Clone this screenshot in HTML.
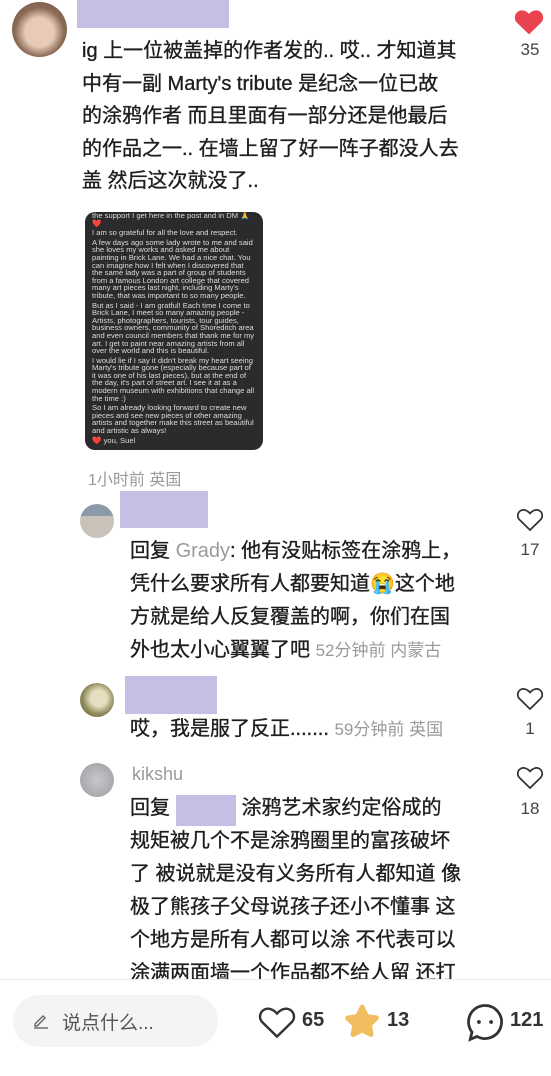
<!DOCTYPE html>
<html><head><meta charset="utf-8"><style>
*{margin:0;padding:0;box-sizing:border-box}
body{width:551px;height:1076px;background:#fff;position:relative;overflow:hidden;font-family:"Liberation Sans","Noto Sans CJK SC",sans-serif;color:#222}
.a{position:absolute}
.pb{position:absolute;background:#c6bfe5}
.av{position:absolute;border-radius:50%}
.t{position:absolute;font-size:20px;line-height:33px;white-space:nowrap;color:#1e1e1e;-webkit-text-stroke:0.35px #1e1e1e}
.g{color:#9a9a9a;-webkit-text-stroke:0}
.cnt{position:absolute;font-size:17px;color:#444;text-align:center;width:40px}
.img{position:absolute;left:85px;top:212px;width:178px;height:238px;background:#2b2a2c;border-radius:10px;overflow:hidden;color:#ddd;font-size:7.6px;line-height:7.6px;padding:0 7px}
.img p{margin-bottom:2px}
</style></head><body>
<div class="av" style="left:12px;top:2px;width:55px;height:55px;background:radial-gradient(circle at 50% 55%,#e7cbb8 0 35%,#8a6a55 60%,#6a5545)"></div>
<div class="pb" style="left:77px;top:0;width:152px;height:28px"></div>
<div class="t" style="left:82px;top:35px;line-height:32.5px">ig 上一位被盖掉的作者发的.. 哎.. 才知道其<br>中有一副 Marty's tribute 是纪念一位已故<br>的涂鸦作者 而且里面有一部分还是他最后<br>的作品之一.. 在墙上留了好一阵子都没人去<br>盖 然后这次就没了..</div>
<svg class="a" style="left:514px;top:9px" width="30" height="26" viewBox="0 0 24 21"><path d="M12 20.5 2.2 11C-.5 8.2.3 3.4 3.8 1.7 6.7.3 10 1.5 12 4c2-2.5 5.3-3.7 8.2-2.3 3.5 1.7 4.3 6.5 1.6 9.3Z" fill="#e8434f"/></svg>
<div class="cnt" style="left:510px;top:40px">35</div>
<div class="img">
<p>the support I get here in the post and in DM 🙏❤️</p>
<p>I am so grateful for all the love and respect.</p>
<p>A few days ago some lady wrote to me and said she loves my works and asked me about painting in Brick Lane. We had a nice chat. You can imagine how I felt when I discovered that the same lady was a part of group of students from a famous London art college that covered many art pieces last night, including Marty's tribute, that was important to so many people.</p>
<p>But as I said - I am gratful! Each time I come to Brick Lane, I meet so many amazing people - Artists, photographers, tourists, tour guides, business owners, community of Shoreditch area and even council members that thank me for my art. I get to paint near amazing artists from all over the world and this is beautiful.</p>
<p>I would lie if I say it didn't break my heart seeing Marty's tribute gone (especially because part of it was one of his last pieces), but at the end of the day, it's part of street art. I see it at as a modern museum with exhibitions that change all the time :)</p>
<p>So I am already looking forward to create new pieces and see new pieces of other amazing artists and together make this street as beautiful and artistic as always!</p>
<p>❤️ you, Suel</p>
</div>
<div class="a g" style="left:88px;top:466px;font-size:16px">1小时前 英国</div>

<div class="av" style="left:80px;top:504px;width:34px;height:34px;background:linear-gradient(#8a9aa8 0 35%,#c9c2b8 35%)"></div>
<div class="pb" style="left:120px;top:491px;width:88px;height:37px"></div>
<div class="t" style="left:130px;top:535px">回复 <span class="g">Grady</span>: 他有没贴标签在涂鸦上，<br>凭什么要求所有人都要知道😭这个地<br>方就是给人反复覆盖的啊，你们在国<br>外也太小心翼翼了吧 <span class="g" style="font-size:17px">52分钟前 内蒙古</span></div>
<svg class="a" style="left:516px;top:507px" width="28" height="25" viewBox="0 0 24 21"><path d="M12 19.5 2.9 10.6C.6 8.2 1.3 4.2 4.2 2.8 6.8 1.5 9.8 2.8 12 5.3c2.2-2.5 5.2-3.8 7.8-2.5 2.9 1.4 3.6 5.4 1.3 7.8Z" fill="none" stroke="#333" stroke-width="1.5"/></svg>
<div class="cnt" style="left:510px;top:540px">17</div>

<div class="av" style="left:80px;top:683px;width:34px;height:34px;background:radial-gradient(circle at 55% 45%,#e8dfc0 0 30%,#8e8a5a 60%,#5e6a40)"></div>
<div class="pb" style="left:125px;top:676px;width:92px;height:38px"></div>
<div class="t" style="left:130px;top:713px">哎，我是服了反正....... <span class="g" style="font-size:17px">59分钟前 英国</span></div>
<svg class="a" style="left:516px;top:686px" width="28" height="25" viewBox="0 0 24 21"><path d="M12 19.5 2.9 10.6C.6 8.2 1.3 4.2 4.2 2.8 6.8 1.5 9.8 2.8 12 5.3c2.2-2.5 5.2-3.8 7.8-2.5 2.9 1.4 3.6 5.4 1.3 7.8Z" fill="none" stroke="#333" stroke-width="1.5"/></svg>
<div class="cnt" style="left:510px;top:719px">1</div>

<div class="av" style="left:80px;top:763px;width:34px;height:34px;background:radial-gradient(circle,#c8c8cc,#9a9aa0)"></div>
<div class="a g" style="left:132px;top:764px;font-size:18px">kikshu</div>
<div class="t" style="left:130px;top:792px">回复 <span style="display:inline-block;width:66px"></span>涂鸦艺术家约定俗成的<br>规矩被几个不是涂鸦圈里的富孩破坏<br>了 被说就是没有义务所有人都知道 像<br>极了熊孩子父母说孩子还小不懂事 这<br>个地方是所有人都可以涂 不代表可以<br>涂满两面墙一个作品都不给人留 还打</div>
<div class="pb" style="left:176px;top:795px;width:60px;height:31px"></div>
<svg class="a" style="left:516px;top:765px" width="28" height="25" viewBox="0 0 24 21"><path d="M12 19.5 2.9 10.6C.6 8.2 1.3 4.2 4.2 2.8 6.8 1.5 9.8 2.8 12 5.3c2.2-2.5 5.2-3.8 7.8-2.5 2.9 1.4 3.6 5.4 1.3 7.8Z" fill="none" stroke="#333" stroke-width="1.5"/></svg>
<div class="cnt" style="left:510px;top:799px">18</div>

<div class="a" style="left:0;top:979px;width:551px;height:97px;background:#fff;border-top:1px solid #eee"></div>
<div class="a" style="left:13px;top:995px;width:205px;height:52px;border-radius:26px;background:#f4f4f4"></div>
<svg class="a" style="left:32px;top:1012px" width="18" height="18" viewBox="0 0 18 18"><path d="M3 12 11 4l2 2-8 8H3z" fill="none" stroke="#666" stroke-width="1.4"/><path d="M2 16h14" stroke="#666" stroke-width="1.4"/></svg>
<div class="a" style="left:62px;top:1008px;font-size:19px;color:#555">说点什么...</div>
<svg class="a" style="left:256px;top:1005px" width="42" height="34" viewBox="0 0 24 21"><path d="M12 19.5 2.9 10.6C.6 8.2 1.3 4.2 4.2 2.8 6.8 1.5 9.8 2.8 12 5.3c2.2-2.5 5.2-3.8 7.8-2.5 2.9 1.4 3.6 5.4 1.3 7.8Z" fill="none" stroke="#333" stroke-width="1.5"/></svg>
<div class="a" style="left:302px;top:1009px;font-size:20px;font-weight:bold;color:#333">65</div>
<svg class="a" style="left:342px;top:1002px" width="40" height="38" viewBox="0 0 24 23"><path d="M12 1.5c.8 0 1.2.6 1.6 1.4l2.2 4.5 4.8.7c1.7.3 2.2 1.6 1 2.8l-3.5 3.4.8 4.8c.3 1.7-.9 2.5-2.4 1.7L12 18.6l-4.4 2.3c-1.5.8-2.7 0-2.4-1.7l.8-4.8-3.5-3.4c-1.2-1.2-.7-2.5 1-2.8l4.8-.7 2.2-4.5c.4-.8.8-1.4 1.5-1.5z" fill="#f2bd5e"/></svg>
<div class="a" style="left:387px;top:1009px;font-size:20px;font-weight:bold;color:#333">13</div>
<svg class="a" style="left:464px;top:1002px" width="42" height="40" viewBox="0 0 24 23"><path d="M12 2a9.5 9.5 0 1 1-4.6 17.8L3.5 21.5l1-4.2A9.5 9.5 0 0 1 12 2z" fill="none" stroke="#333" stroke-width="1.6"/><circle cx="8.5" cy="11.5" r="1.1" fill="#333"/><circle cx="15.5" cy="11.5" r="1.1" fill="#333"/></svg>
<div class="a" style="left:510px;top:1009px;font-size:20px;font-weight:bold;color:#333">121</div>
</body></html>
